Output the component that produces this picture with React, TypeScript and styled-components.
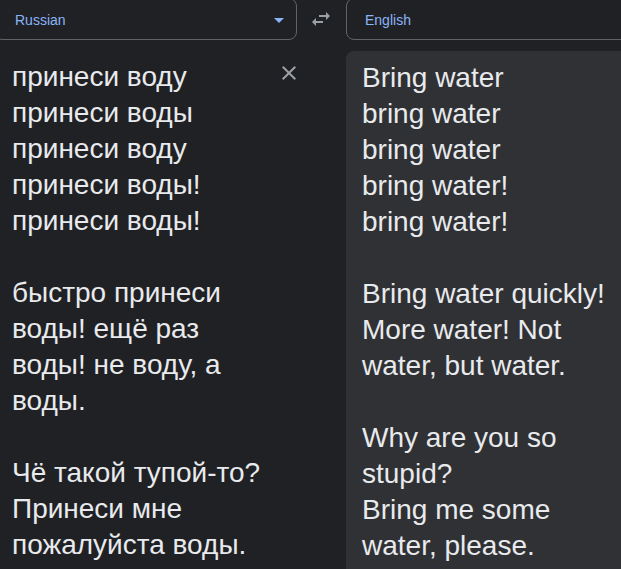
import { ReactElement } from "react"
import styled, { createGlobalStyle } from "styled-components"

const GlobalStyle = createGlobalStyle`
	html, body {
		margin: 0;
		padding: 0;
		background: #202124;
		overflow: hidden;
	}
	body {
		font-family: "Liberation Sans", Arial, sans-serif;
	}
`

const SOURCE_TEXT = `принеси воду
принеси воды
принеси воду
принеси воды!
принеси воды!

быстро принеси воды! ещё раз воды! не воду, а воды.

Чё такой тупой-то?
Принеси мне пожалуйста воды.`

const TARGET_TEXT = `Bring water
bring water
bring water
bring water!
bring water!

Bring water quickly! More water! Not water, but water.

Why are you so stupid?
Bring me some water, please.`

const SwapIcon = (): ReactElement => (
	<svg width="24" height="24" viewBox="0 0 24 24" fill="#9aa0a6">
		<path d="M6.99 11L3 15l3.99 4v-3H14v-2H6.99v-3zM21 9l-3.99-4v3H10v2h7.01v3L21 9z" />
	</svg>
)

const CloseIcon = (): ReactElement => (
	<svg width="24" height="24" viewBox="0 0 24 24" fill="#9aa0a6">
		<path d="M19 6.41L17.59 5 12 10.59 6.41 5 5 6.41 10.59 12 5 17.59 6.41 19 12 13.41 17.59 19 19 17.59 13.41 12z" />
	</svg>
)

const ArrowDown = (): ReactElement => (
	<svg width="24" height="24" viewBox="0 0 24 24" fill="#8ab4f8">
		<path d="M7 10l5 5 5-5z" />
	</svg>
)

const App = (): ReactElement => {
	return (
		<>
			<GlobalStyle />
			<S.Translator>
				<S.LangSelect>
					<span className="label">Russian</span>
					<ArrowDown />
				</S.LangSelect>
				<S.SwapButton>
					<SwapIcon />
				</S.SwapButton>
				<S.LangSelect $right>
					<span className="label">English</span>
				</S.LangSelect>

				<S.SourcePanel>
					<S.TextArea $pad="8px 0 0 18px">{SOURCE_TEXT}</S.TextArea>
					<S.ClearButton>
						<CloseIcon />
					</S.ClearButton>
				</S.SourcePanel>
				<S.OutputPanel>
					<S.TextArea $pad="9px 15px 0 16px">{TARGET_TEXT}</S.TextArea>
				</S.OutputPanel>
			</S.Translator>
		</>
	)
}

export const S = {
	Translator: styled.div`
		display: grid;
		grid-template-columns: 303px 49px 295px;
		grid-template-rows: 42px 1fr;
		row-gap: 11px;
		margin: -2px 0 0 -6px;
		width: 647px;
		height: 580px;
	`,
	LangSelect: styled.div<{ $right?: boolean }>`
		display: flex;
		align-items: center;
		justify-content: space-between;
		box-sizing: border-box;
		height: 42px;
		padding: 2px 5px 0 ${p => (p.$right ? "18px" : "20px")};
		border: 1px solid #5f6368;
		border-radius: 8px;

		.label {
			font-size: 14px;
			color: #8ab4f8;
		}
	`,
	SwapButton: styled.div`
		display: flex;
		justify-content: center;
		padding-top: 9px;
		padding-right: 2px;
	`,
	SourcePanel: styled.div`
		grid-column: 1 / 3;
		display: flex;
		align-items: flex-start;
	`,
	OutputPanel: styled.div`
		grid-column: 3;
		background: #303134;
		border-radius: 8px 0 0 0;
	`,
	TextArea: styled.div<{ $pad: string }>`
		flex: 1;
		padding: ${p => p.$pad};
		font-size: 28px;
		line-height: 36px;
		color: #e8eaed;
		white-space: pre-wrap;
	`,
	ClearButton: styled.div`
		display: flex;
		width: 24px;
		height: 24px;
		margin: 10px 45px 0 7px;
	`,
}

export default App
